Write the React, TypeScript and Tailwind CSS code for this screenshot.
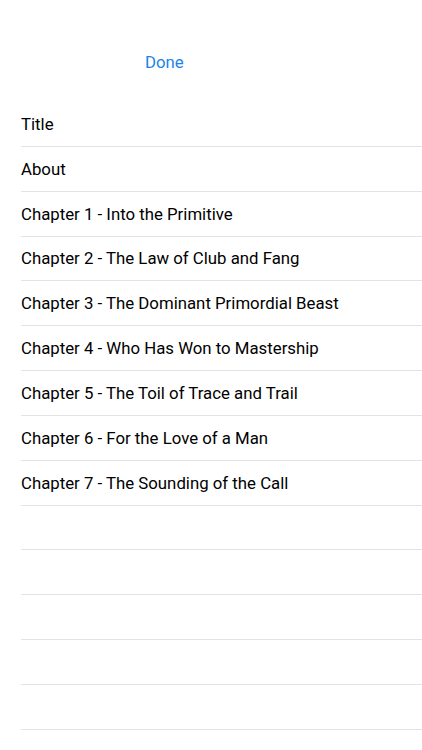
import React from "react";

const items = [
  "Title",
  "About",
  "Chapter 1 - Into the Primitive",
  "Chapter 2 - The Law of Club and Fang",
  "Chapter 3 - The Dominant Primordial Beast",
  "Chapter 4 - Who Has Won to Mastership",
  "Chapter 5 - The Toil of Trace and Trail",
  "Chapter 6 - For the Love of a Man",
  "Chapter 7 - The Sounding of the Call",
  "",
  "",
  "",
  "",
  "",
  "",
];

export default function App() {
  return (
    <div
      className="w-[422px] h-[750px] overflow-hidden bg-white"
      style={{ fontFamily: "Roboto, 'Noto Sans', sans-serif" }}
    >
      <div className="pt-[40px] h-[84px]">
        <div className="h-[44px] flex items-center pl-[145px]">
          <button className="text-[16.8px] leading-[20px] text-[#1a84e8]">Done</button>
        </div>
      </div>
      <div className="mt-[18px]">
        {items.map((t, i) => (
          <div
            key={i}
            className="ml-[21px] h-[44.85px] border-b border-[#e3e3e6] flex items-center text-[16.8px] leading-[20px] text-black"
          >
            {t}
          </div>
        ))}
      </div>
    </div>
  );
}
